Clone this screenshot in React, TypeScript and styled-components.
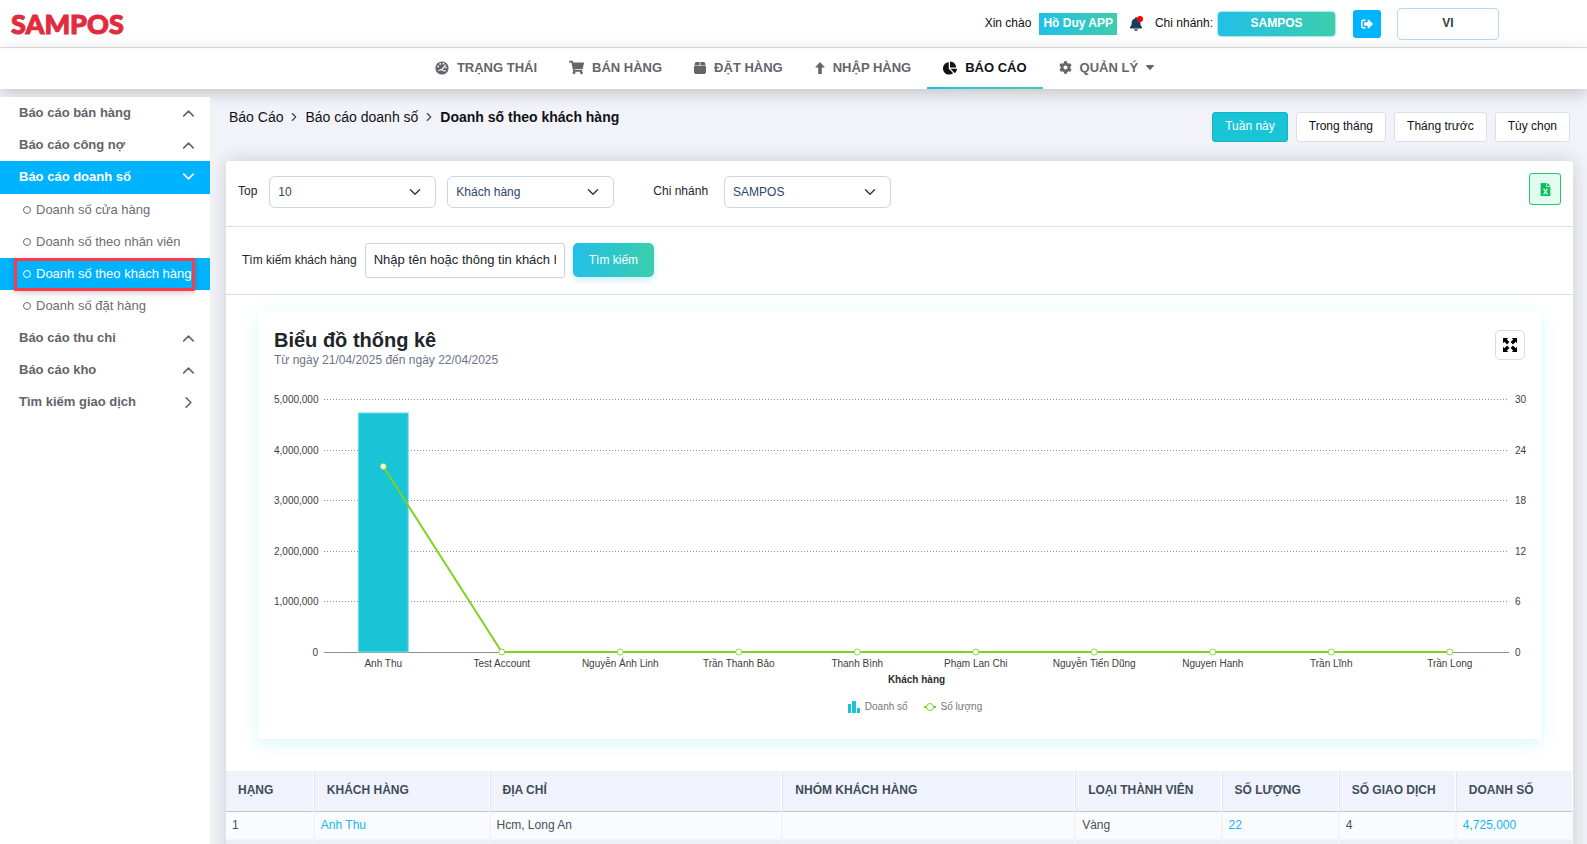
import React from "react";
import styled, { createGlobalStyle, css } from "styled-components";
import {
  FaBell,
  FaChartPie,
  FaCog,
  FaFileExcel,
  FaShoppingCart,
  FaSignOutAlt,
} from "react-icons/fa";
import { ChevronDown, ChevronRight, ChevronUp } from "lucide-react";

const GlobalStyle = createGlobalStyle`
  *, *::before, *::after { box-sizing: border-box; }
  body { margin: 0; background: #f2f3f8; }
  body, button, input, select { font-family: "Liberation Sans", Arial, sans-serif; }
  a { text-decoration: none; color: inherit; }
`;

const gradient = "linear-gradient(90deg, #22bfe8, #3bceac)";

const Page = styled.div`
  display: flex;
  flex-direction: column;
  height: 100vh;
  overflow: hidden;
  font-size: 12px;
  line-height: 16px;
  color: #212529;
`;

/* ---------- top bar ---------- */

const TopBar = styled.header`
  display: flex;
  align-items: center;
  height: 48px;
  flex: none;
  padding: 0 88px 0 11px;
  background: #fff;
  border-bottom: 1px solid #e3e3e5;
`;

const Logo = styled.a`
  margin-right: auto;
  font-family: Lato, sans-serif;
  font-weight: 900;
  font-size: 27px;
  line-height: 32px;
  color: #e32b3e;
  -webkit-text-stroke: 1px #e32b3e;
`;

const BarText = styled.span`
  padding-bottom: 2px;
  color: #111;
`;

const UserBadge = styled.a`
  height: 22px;
  line-height: 21px;
  margin-left: 8px;
  padding: 0 4px;
  font-weight: bold;
  color: #fff;
  background: ${gradient};
`;

const BellButton = styled.button`
  position: relative;
  display: flex;
  margin: 0 12px;
  padding: 0;
  border: 0;
  background: none;
  color: #1f3a5f;
  font-size: 14px;
`;

const BellDot = styled.span`
  position: absolute;
  top: -1px;
  right: 0;
  width: 6px;
  height: 6px;
  border-radius: 50%;
  background: #f00;
`;

const BranchButton = styled.button`
  width: 119px;
  height: 26px;
  margin: 0 17px 0 4px;
  padding: 0 0 2px;
  border: 1px solid #a5ecec;
  border-radius: 4px;
  background: ${gradient};
  color: #fff;
  font-weight: bold;
  font-size: 12px;
`;

const LogoutButton = styled.button`
  display: flex;
  align-items: center;
  justify-content: center;
  width: 28px;
  height: 28px;
  padding: 0;
  border: 0;
  border-radius: 3px;
  background: #00b3ff;
  color: #fff;
  font-size: 12px;
`;

const LanguageButton = styled.button`
  width: 102px;
  height: 32px;
  margin-left: 16px;
  padding: 0 0 2px;
  border: 1px solid #b9d6fc;
  border-radius: 4px;
  background: #fff;
  color: #2d3e4a;
  font-weight: bold;
  font-size: 12px;
`;

/* ---------- main navigation ---------- */

const Nav = styled.nav`
  position: relative;
  display: flex;
  justify-content: center;
  flex: none;
  height: 41px;
  padding-left: 2px;
  background: linear-gradient(#fbfbfb, #fff 8px);
  box-shadow: 0 4px 16px rgba(0, 0, 0, 0.2);
`;

const NavItem = styled.a<{ $active?: boolean }>`
  display: flex;
  align-items: center;
  gap: 8px;
  padding: 0 16px 2px;
  font-size: 13px;
  font-weight: bold;
  color: ${(p) => (p.$active ? "#111118" : "#65656b")};
  ${(p) =>
    p.$active &&
    css`
      padding-bottom: 0;
      border-bottom: 2px solid;
      border-image: ${gradient} 1;
    `}
`;

const Body = styled.div`
  display: flex;
  flex: 1;
  min-height: 0;
`;

/* ---------- sidebar ---------- */

const Sidebar = styled.aside`
  position: relative;
  z-index: 1;
  flex: none;
  width: 210px;
  margin-top: 8px;
  background: #fff;
`;

const MenuHeading = styled.a<{ $active?: boolean }>`
  display: flex;
  align-items: center;
  justify-content: space-between;
  height: ${(p) => (p.$active ? 33 : 32)}px;
  padding: 0 12px ${(p) => (p.$active ? 2 : 0)}px 19px;
  font-size: 13px;
  font-weight: bold;
  color: ${(p) => (p.$active ? "#fff" : "#63636a")};
  background: ${(p) => (p.$active ? "#00b3ff" : "transparent")};
`;

const SubItem = styled.a<{ $active?: boolean }>`
  position: relative;
  display: flex;
  align-items: center;
  gap: 5px;
  height: 32px;
  padding-left: 23px;
  font-size: 13px;
  white-space: nowrap;
  color: ${(p) => (p.$active ? "#fff" : "#6c6c73")};
  background: ${(p) => (p.$active ? "#00b3ff" : "transparent")};
`;

const Bullet = styled.span`
  width: 8px;
  height: 8px;
  border: 1px solid currentColor;
  border-radius: 50%;
`;

const Highlight = styled.span`
  position: absolute;
  inset: 0 15px -1px 14px;
  border: 3px solid #fb3a4a;
  border-radius: 1px;
  box-shadow: 0 2px 6px rgba(0, 0, 0, 0.2);
`;

/* ---------- content ---------- */

const Content = styled.main`
  flex: 1;
  min-width: 0;
  display: flex;
  flex-direction: column;
  padding: 18px 14px 0 16px;
`;

const PageHead = styled.div`
  display: flex;
  justify-content: space-between;
  align-items: flex-start;
  padding: 0 3px;
`;

const Breadcrumb = styled.nav`
  display: flex;
  align-items: center;
  gap: 4px;
  font-size: 14px;
  line-height: 20px;
  color: #111118;

  svg {
    color: #3f4254;
    stroke-width: 2;
  }
`;

const Periods = styled.div`
  display: flex;
  gap: 8px;
  margin: 5px 0 19px;
`;

const PeriodButton = styled.button<{ $active?: boolean }>`
  height: 30px;
  padding: 0 12px 2px;
  border: 1px solid ${(p) => (p.$active ? "#14b4c2" : "#dadfea")};
  border-radius: 3px;
  background: ${(p) => (p.$active ? "#18c4d5" : "#fff")};
  color: ${(p) => (p.$active ? "#fff" : "#111118")};
  font-size: 12px;
`;

const Card = styled.section`
  flex: none;
  border-radius: 4px;
  background: #fff;
  box-shadow: 0 0 20px rgba(0, 0, 0, 0.16);
`;

const FilterRow = styled.div`
  display: flex;
  align-items: flex-start;
  height: 66px;
  padding: 12px 12px 0;
  border-bottom: 1px solid #d8dfe9;
`;

const Field = styled.label<{ $gap: number; $before?: number }>`
  display: flex;
  align-items: center;
  gap: ${(p) => p.$gap}px;
  margin: 3px 0 0 ${(p) => p.$before ?? 0}px;
  line-height: 18px;
`;

const FieldName = styled.span`
  padding-bottom: 2px;
`;

const SelectBox = styled.span`
  position: relative;
  display: block;
  width: 167px;

  svg {
    position: absolute;
    right: 12px;
    top: 7px;
    pointer-events: none;
    color: #343a40;
  }
`;

const Select = styled.select`
  appearance: none;
  width: 100%;
  height: 32px;
  padding: 0 8px;
  border: 1px solid #cfd3dc;
  border-radius: 6px;
  background: #fff;
  color: #2c456b;
  font-size: 12px;
`;

const ExportButton = styled.button`
  display: flex;
  align-items: center;
  justify-content: center;
  width: 32px;
  height: 32px;
  margin-left: auto;
  padding: 0;
  border: 1px solid #1dc96f;
  border-radius: 3px;
  background: #e2fdf0;
  color: #0bc15f;
  font-size: 13px;
`;

const SearchRow = styled.form`
  display: flex;
  align-items: flex-start;
  height: 68px;
  padding: 16px;
  border-bottom: 1px solid #d8dfe9;
`;

const SearchLabel = styled.label`
  margin-right: 8px;
  line-height: 34px;
`;

const SearchInput = styled.input`
  width: 200px;
  height: 35px;
  padding: 0 8px 2px;
  border: 1px solid #cdd2d9;
  border-radius: 3px;
  font-size: 13px;
  color: #212529;

  &::placeholder {
    color: #212529;
  }
`;

const SearchButton = styled.button`
  height: 34px;
  margin-left: 8px;
  padding: 0 16px 1px;
  border: 0;
  border-radius: 5px;
  background: ${gradient};
  box-shadow: 0 3px 6px rgba(34, 191, 232, 0.25);
  color: #fff;
  font-size: 12px;
`;

/* ---------- chart ---------- */

const ChartCard = styled.section`
  margin: 16px 32px 32px;
  padding: 17px 16px 25px;
  background: #fff;
  box-shadow: 0 4px 16px rgba(60, 215, 225, 0.2);
`;

const ChartHead = styled.div`
  display: flex;
  justify-content: space-between;
  align-items: flex-start;
`;

const ChartTitle = styled.h2`
  margin: 0;
  font-size: 20px;
  line-height: 24px;
  color: #212529;
`;

const ChartRange = styled.p`
  margin: 0;
  color: #6b7488;
`;

const ExpandButton = styled.button`
  display: flex;
  align-items: center;
  justify-content: center;
  width: 30px;
  height: 30px;
  margin-top: 2px;
  padding: 0;
  border: 1px solid #dcdcde;
  border-radius: 5px;
  background: #fff;
`;

const Chart = styled.div`
  display: grid;
  grid-template-columns: 44px 1fr 10px;
  column-gap: 6px;
  margin-top: 31px;
  font-size: 10px;
  line-height: 14px;
  color: #3c3c3c;
`;

const Axis = styled.div`
  display: flex;
  flex-direction: column;
  justify-content: space-between;
  margin: -6px 0 -8px;
  text-align: right;
`;

const RightAxis = styled(Axis)`
  text-align: left;
`;

const Plot = styled.svg`
  display: block;
  width: 100%;
  height: 253px;
  overflow: visible;
`;

const Categories = styled.div`
  grid-column: 2;
  display: grid;
  grid-auto-flow: column;
  grid-auto-columns: 1fr;
  margin-top: 5px;
  text-align: center;
`;

const AxisTitle = styled.div`
  grid-column: 2;
  margin-top: 2px;
  text-align: center;
  font-weight: bold;
  color: #2e2e2e;
`;

const Legend = styled.div`
  grid-column: 2;
  display: flex;
  justify-content: center;
  gap: 16px;
  margin-top: 13px;
  padding-right: 3px;
  color: #76767a;
`;

const LegendItem = styled.span`
  display: flex;
  align-items: center;
  gap: 5px;
`;

/* ---------- table ---------- */

const Table = styled.table`
  width: 100%;
  table-layout: fixed;
  border-collapse: separate;
  border-spacing: 0;
  color: #495057;
`;

const Th = styled.th`
  height: 41px;
  padding: 0 12px 2px;
  text-align: left;
  color: #3f4d5a;
  background: #f0f3fc;
  border-bottom: 1px solid #bdc8d8;
  border-right: 1px solid #fff;

  & + & {
    border-left: 1px solid #dfe6f0;
  }
`;

const Td = styled.td`
  height: 28px;
  padding: 0 6px 2px;
  background: #fafbfd;
  border-right: 1px solid #f1f4f8;
  border-bottom: 1px solid #f1f4f8;

  & + & {
    border-left: 1px solid #f1f4f8;
  }

  tr:nth-child(even) > & {
    background: #ebeff6;
  }
`;

const TableLink = styled.a`
  color: #12b5f9;
`;

const columns = [
  { title: "HẠNG", share: 1.5 },
  { title: "KHÁCH HÀNG", share: 3 },
  { title: "ĐỊA CHỈ", share: 5 },
  { title: "NHÓM KHÁCH HÀNG", share: 5 },
  { title: "LOẠI THÀNH VIÊN", share: 2.5 },
  { title: "SỐ LƯỢNG", share: 2 },
  { title: "SỐ GIAO DỊCH", share: 2 },
  { title: "DOANH SỐ", share: 2 },
];
const totalShare = columns.reduce((sum, c) => sum + c.share, 0);

const customers = [
  { name: "Anh Thu", sales: 4725000, quantity: 22 },
  { name: "Test Account", sales: 0, quantity: 0 },
  { name: "Nguyễn Ánh Linh", sales: 0, quantity: 0 },
  { name: "Trần Thanh Bảo", sales: 0, quantity: 0 },
  { name: "Thanh Bình", sales: 0, quantity: 0 },
  { name: "Phạm Lan Chi", sales: 0, quantity: 0 },
  { name: "Nguyễn Tiến Dũng", sales: 0, quantity: 0 },
  { name: "Nguyen Hanh", sales: 0, quantity: 0 },
  { name: "Trần Lĩnh", sales: 0, quantity: 0 },
  { name: "Trần Long", sales: 0, quantity: 0 },
];

const salesTicks = [5000000, 4000000, 3000000, 2000000, 1000000, 0];
const quantityTicks = [30, 24, 18, 12, 6, 0];
const plotHeight = 253;

const GaugeIcon = () => (
  <svg width="14" height="14" viewBox="0 0 14 14" aria-hidden="true">
    <circle cx="7" cy="7" r="6.6" fill="currentColor" />
    <g fill="#fff">
      <circle cx="3.2" cy="5.4" r="0.9" />
      <circle cx="5.2" cy="2.9" r="0.9" />
      <circle cx="8.4" cy="2.7" r="0.9" />
      <circle cx="11" cy="6.6" r="0.8" />
    </g>
    <path d="M10.6 4.2 7.4 8" stroke="#fff" strokeWidth="1.2" strokeLinecap="round" />
    <path d="M3.4 10c1.2-1.6 3-1.7 4.2-.6 1 .8 2 .7 3 .1" fill="none" stroke="#fff" strokeWidth="1.1" />
  </svg>
);

const BoxIcon = () => (
  <svg width="12" height="12" viewBox="0 0 12 12" fill="currentColor" aria-hidden="true">
    <path d="M2.2 0h3.4v3.4H0.3L1 0.9Q1.3 0 2.2 0zM6.4 0h3.4q0.9 0 1.2 0.9l0.7 2.5H6.4zM0 4.1h12v6.1Q12 12 10.2 12H1.8Q0 12 0 10.2z" />
  </svg>
);

const UpIcon = () => (
  <svg width="10" height="12" viewBox="0 0 10 12" aria-hidden="true">
    <path d="M5 0 10 5.6H6.8V12H3.2V5.6H0z" fill="currentColor" />
  </svg>
);

const CaretIcon = () => (
  <svg width="8" height="5" viewBox="0 0 8 5" aria-hidden="true">
    <path d="M0.6 0h6.8q0.9 0.1 0.4 0.9L4.6 4.6q-0.6 0.6-1.2 0L0.2 0.9Q-0.3 0.1 0.6 0z" fill="currentColor" />
  </svg>
);

const ExpandIcon = () => (
  <svg width="14" height="14" viewBox="0 0 14 14" aria-hidden="true">
    {[0, 90, 180, 270].map((angle) => (
      <path key={angle} d="M0 0h5.2L3.8 1.4 6.4 4 4 6.4 1.4 3.8 0 5.2z" transform={`rotate(${angle} 7 7)`} />
    ))}
  </svg>
);

const center = (i: number) => `${((i + 0.5) * 100) / customers.length}%`;

function SalesPlot() {
  const quantityY = (q: number) => plotHeight - (q / 30) * plotHeight;
  return (
    <Plot role="img" aria-label="Doanh số và số lượng theo khách hàng">
      {salesTicks.slice(0, -1).map((t) => {
        const y = Math.round(plotHeight * (1 - t / 5000000)) + 0.5;
        return <line key={t} x1="0" x2="100%" y1={y} y2={y} stroke="#8c8c8c" strokeDasharray="1 2" />;
      })}
      <line x1="0" x2="100%" y1={plotHeight + 0.5} y2={plotHeight + 0.5} stroke="#8f8f93" />
      {customers.map((c, i) => {
        const h = (c.sales / 5000000) * plotHeight;
        return h > 0 ? (
          <svg key={c.name} x={center(i)} overflow="visible">
            <rect x="-25" y={plotHeight - h} width="50" height={h} fill="#18c4d5" stroke="#7fdfe8" />
          </svg>
        ) : null;
      })}
      {customers.slice(1).map((c, i) => (
        <line
          key={c.name}
          x1={center(i)}
          y1={quantityY(customers[i].quantity)}
          x2={center(i + 1)}
          y2={quantityY(c.quantity)}
          stroke="#7ed321"
          strokeWidth="2"
        />
      ))}
      {customers.map((c, i) => (
        <circle key={c.name} cx={center(i)} cy={quantityY(c.quantity)} r="3" fill="#fff" stroke="#8fd83f" />
      ))}
    </Plot>
  );
}

const navItems = [
  { label: "TRẠNG THÁI", icon: <GaugeIcon /> },
  { label: "BÁN HÀNG", icon: <FaShoppingCart size={15} /> },
  { label: "ĐẶT HÀNG", icon: <BoxIcon /> },
  { label: "NHẬP HÀNG", icon: <UpIcon /> },
  { label: "BÁO CÁO", icon: <FaChartPie size={14} />, active: true },
  { label: "QUẢN LÝ", icon: <FaCog size={13} />, caret: true },
];

const submenu = ["Doanh số cửa hàng", "Doanh số theo nhân viên", "Doanh số theo khách hàng", "Doanh số đặt hàng"];

const Dropdown = ({ options }: { options: string[] }) => (
  <SelectBox>
    <Select>
      {options.map((o) => (
        <option key={o}>{o}</option>
      ))}
    </Select>
    <ChevronDown size={18} />
  </SelectBox>
);

export default function App() {
  return (
    <Page>
      <GlobalStyle />
      <TopBar>
        <Logo href="#">SAMPOS</Logo>
        <BarText>Xin chào</BarText>
        <UserBadge href="#">Hồ Duy APP</UserBadge>
        <BellButton aria-label="Thông báo">
          <FaBell />
          <BellDot />
        </BellButton>
        <BarText>Chi nhánh:</BarText>
        <BranchButton>SAMPOS</BranchButton>
        <LogoutButton aria-label="Đăng xuất">
          <FaSignOutAlt />
        </LogoutButton>
        <LanguageButton>VI</LanguageButton>
      </TopBar>

      <Nav>
        {navItems.map((item) => (
          <NavItem key={item.label} href="#" $active={item.active}>
            {item.icon}
            {item.label}
            {item.caret && <CaretIcon />}
          </NavItem>
        ))}
      </Nav>

      <Body>
        <Sidebar>
          <MenuHeading href="#">
            Báo cáo bán hàng <ChevronUp size={19} />
          </MenuHeading>
          <MenuHeading href="#">
            Báo cáo công nợ <ChevronUp size={19} />
          </MenuHeading>
          <MenuHeading href="#" $active>
            Báo cáo doanh số <ChevronDown size={19} />
          </MenuHeading>
          {submenu.map((name, i) => (
            <SubItem key={name} href="#" $active={i === 2}>
              <Bullet />
              {name}
              {i === 2 && <Highlight />}
            </SubItem>
          ))}
          <MenuHeading href="#">
            Báo cáo thu chi <ChevronUp size={19} />
          </MenuHeading>
          <MenuHeading href="#">
            Báo cáo kho <ChevronUp size={19} />
          </MenuHeading>
          <MenuHeading href="#">
            Tìm kiếm giao dịch <ChevronRight size={19} />
          </MenuHeading>
        </Sidebar>

        <Content>
          <PageHead>
            <Breadcrumb>
              <a href="#">Báo Cáo</a>
              <ChevronRight size={14} />
              <a href="#">Báo cáo doanh số</a>
              <ChevronRight size={14} />
              <strong>Doanh số theo khách hàng</strong>
            </Breadcrumb>
            <Periods>
              <PeriodButton $active>Tuần này</PeriodButton>
              <PeriodButton>Trong tháng</PeriodButton>
              <PeriodButton>Tháng trước</PeriodButton>
              <PeriodButton>Tùy chọn</PeriodButton>
            </Periods>
          </PageHead>

          <Card>
            <FilterRow>
              <Field $gap={12}>
                <FieldName>Top</FieldName>
                <Dropdown options={["10", "20", "50"]} />
              </Field>
              <Field $gap={0} $before={11}>
                <Dropdown options={["Khách hàng"]} />
              </Field>
              <Field $gap={16} $before={39}>
                <FieldName>Chi nhánh</FieldName>
                <Dropdown options={["SAMPOS"]} />
              </Field>
              <ExportButton aria-label="Xuất Excel">
                <FaFileExcel />
              </ExportButton>
            </FilterRow>

            <SearchRow onSubmit={(e) => e.preventDefault()}>
              <SearchLabel htmlFor="customer">Tìm kiếm khách hàng</SearchLabel>
              <SearchInput id="customer" placeholder="Nhập tên hoặc thông tin khách hàng" />
              <SearchButton>Tìm kiếm</SearchButton>
            </SearchRow>

            <ChartCard>
              <ChartHead>
                <div>
                  <ChartTitle>Biểu đồ thống kê</ChartTitle>
                  <ChartRange>Từ ngày 21/04/2025 đến ngày 22/04/2025</ChartRange>
                </div>
                <ExpandButton aria-label="Toàn màn hình">
                  <ExpandIcon />
                </ExpandButton>
              </ChartHead>
              <Chart>
                <Axis>
                  {salesTicks.map((t) => (
                    <span key={t}>{t.toLocaleString("en-US")}</span>
                  ))}
                </Axis>
                <SalesPlot />
                <RightAxis>
                  {quantityTicks.map((t) => (
                    <span key={t}>{t}</span>
                  ))}
                </RightAxis>
                <Categories>
                  {customers.map((c) => (
                    <span key={c.name}>{c.name}</span>
                  ))}
                </Categories>
                <AxisTitle>Khách hàng</AxisTitle>
                <Legend>
                  <LegendItem>
                    <svg width="12" height="12" fill="#18c4d5" aria-hidden="true">
                      <path d="M0 3h3v9H0zM4 0h4v12H4zM9 7h3v5H9z" />
                    </svg>
                    Doanh số
                  </LegendItem>
                  <LegendItem>
                    <svg width="12" height="10" fill="#fff" stroke="#7ed321" aria-hidden="true">
                      <path d="M0 5h12" strokeWidth="2" />
                      <circle cx="6" cy="5" r="3.5" />
                    </svg>
                    Số lượng
                  </LegendItem>
                </Legend>
              </Chart>
            </ChartCard>

            <Table>
              <colgroup>
                {columns.map((c) => (
                  <col key={c.title} style={{ width: `${(c.share * 100) / totalShare}%` }} />
                ))}
              </colgroup>
              <thead>
                <tr>
                  {columns.map((c) => (
                    <Th key={c.title}>{c.title}</Th>
                  ))}
                </tr>
              </thead>
              <tbody>
                <tr>
                  <Td>1</Td>
                  <Td>
                    <TableLink href="#">Anh Thu</TableLink>
                  </Td>
                  <Td>Hcm, Long An</Td>
                  <Td />
                  <Td>Vàng</Td>
                  <Td>
                    <TableLink href="#">22</TableLink>
                  </Td>
                  <Td>4</Td>
                  <Td>
                    <TableLink href="#">4,725,000</TableLink>
                  </Td>
                </tr>
                <tr>
                  {columns.map((c) => (
                    <Td key={c.title} />
                  ))}
                </tr>
              </tbody>
            </Table>
          </Card>
        </Content>
      </Body>
    </Page>
  );
}
